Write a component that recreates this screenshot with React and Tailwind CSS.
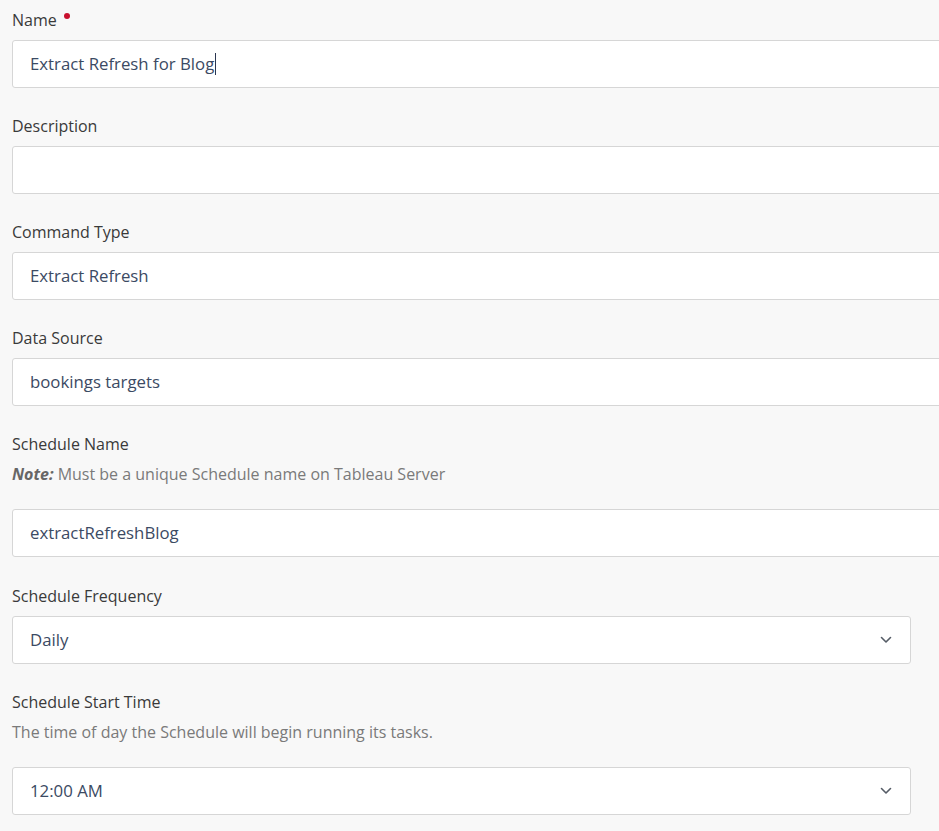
import React from "react";

const font = { fontFamily: "'Open Sans', Lato, sans-serif" };

function Label({ children, required }) {
  return (
    <div className="h-6 leading-6 text-[16px] text-[#3a3a3a] flex items-start">
      <span>{children}</span>
      {required && <span className="ml-[7px] mt-[5px] w-[6px] h-[6px] rounded-full bg-[#c8102e]" />}
    </div>
  );
}

function TextBox({ value, cursor }) {
  return (
    <div className="h-12 w-[960px] bg-white border border-[#d6d6d6] rounded-[3px] flex items-center pl-[17px] text-[16.8px] text-[#3b4a63]">
      <span>{value}</span>
      {cursor && <span className="w-px h-[22px] bg-[#2a3550] ml-px" />}
    </div>
  );
}

function SelectBox({ value }) {
  return (
    <div className="h-12 w-[899px] bg-white border border-[#d6d6d6] rounded-[3px] flex items-center justify-between pl-[17px] pr-[18px] text-[16.8px] text-[#3b4a63]">
      <span>{value}</span>
      <svg width="12" height="8" viewBox="0 0 12 8" fill="none">
        <path d="M1.5 1.5 L6 6 L10.5 1.5" stroke="#555c66" strokeWidth="1.6" strokeLinecap="round" strokeLinejoin="round" />
      </svg>
    </div>
  );
}

function Help({ children }) {
  return <div className="mt-[6px] mb-[23px] h-6 leading-6 text-[16px] text-[#7a7a7a]">{children}</div>;
}

export default function App() {
  return (
    <div className="w-[939px] h-[831px] overflow-hidden bg-[#f8f8f8] pl-3 pt-2" style={font}>
      <div className="mb-[26px]">
        <div className="mb-2"><Label required>Name</Label></div>
        <TextBox value="Extract Refresh for Blog" cursor />
      </div>
      <div className="mb-[26px]">
        <div className="mb-2"><Label>Description</Label></div>
        <TextBox value="" />
      </div>
      <div className="mb-[26px]">
        <div className="mb-2"><Label>Command Type</Label></div>
        <TextBox value="Extract Refresh" />
      </div>
      <div className="mb-[26px]">
        <div className="mb-2"><Label>Data Source</Label></div>
        <TextBox value="bookings targets" />
      </div>
      <div className="mb-[27px]">
        <Label>Schedule Name</Label>
        <Help>
          <span className="font-bold italic text-[#666666]">Note:</span> Must be a unique Schedule name on Tableau Server
        </Help>
        <TextBox value="extractRefreshBlog" />
      </div>
      <div className="mb-[26px]">
        <div className="mb-2"><Label>Schedule Frequency</Label></div>
        <SelectBox value="Daily" />
      </div>
      <div>
        <Label>Schedule Start Time</Label>
        <Help>The time of day the Schedule will begin running its tasks.</Help>
        <SelectBox value="12:00 AM" />
      </div>
    </div>
  );
}
